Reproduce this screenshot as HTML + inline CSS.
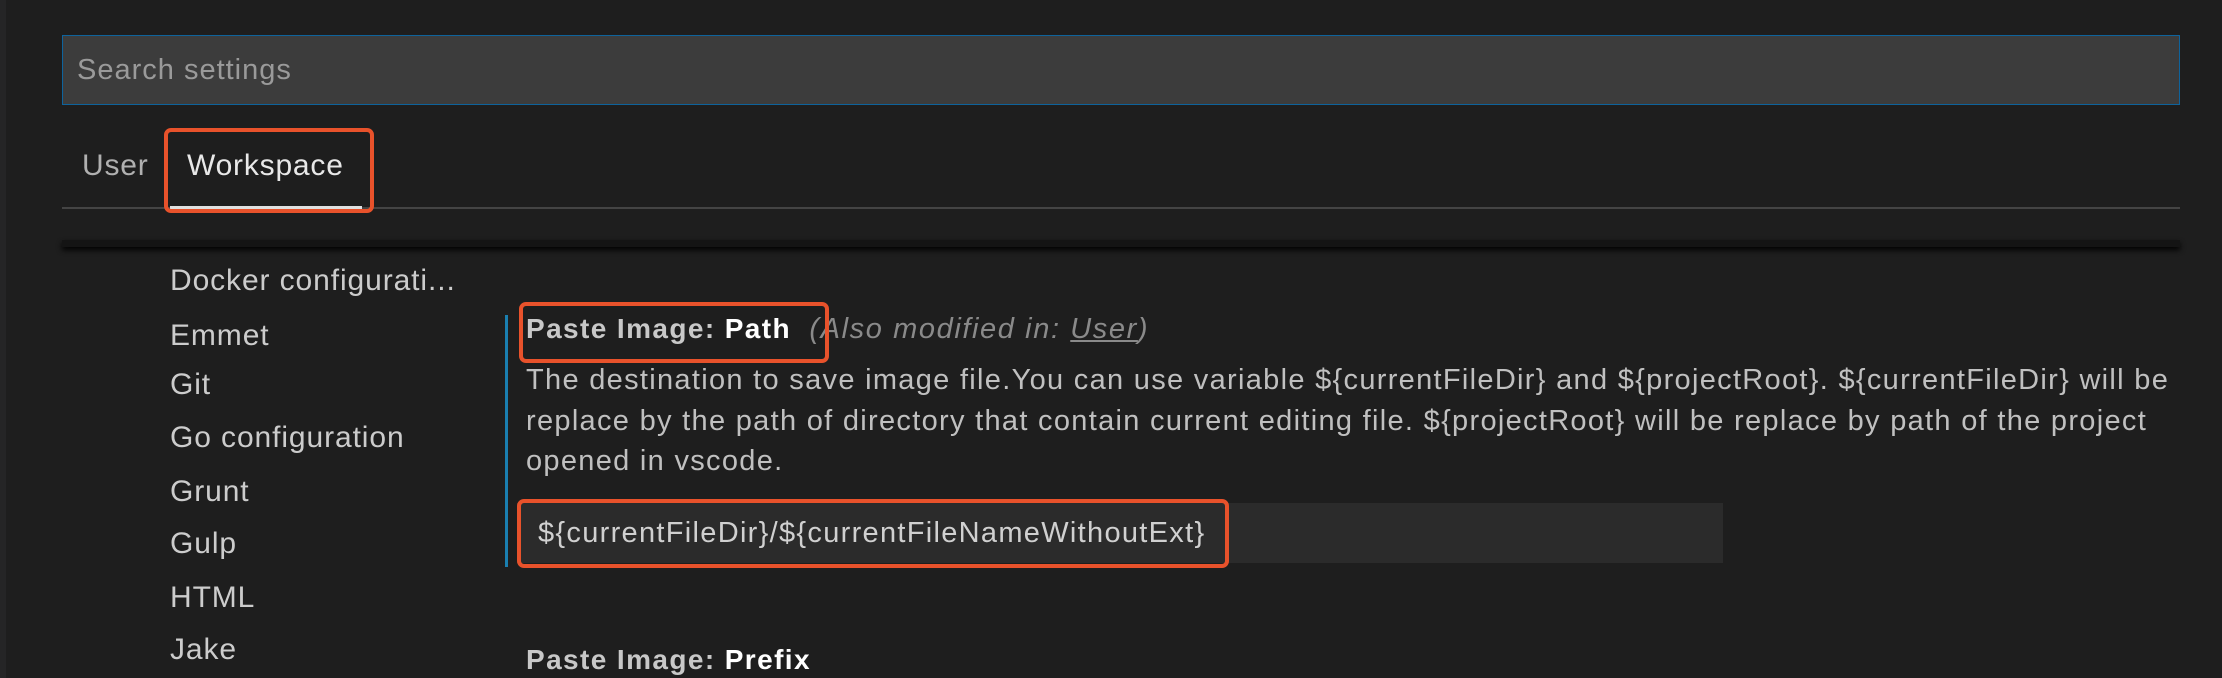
<!DOCTYPE html>
<html><head><meta charset="utf-8"><style>
*{margin:0;padding:0;box-sizing:border-box}
body{width:2222px;height:678px;background:#1e1e1e;font-family:"Liberation Sans",sans-serif;color:#cccccc;position:relative;overflow:hidden}
.abs{position:absolute}
.search{left:62px;top:35px;width:2118px;height:70px;background:#3c3c3c;border:1px solid #0e639c;color:#9a9a9a;font-size:29px;letter-spacing:1px;line-height:68px;padding-left:14px}
.tab{top:147px;font-size:30px;letter-spacing:0.8px;line-height:38px}
.ob{border:4px solid #e8522b;border-radius:7px}
.list div{position:absolute;left:170px;font-size:30px;letter-spacing:0.9px;color:#cccccc;line-height:36px}
.desc{left:526px;top:360px;width:1660px;font-size:29px;letter-spacing:1.3px;line-height:40.5px;color:#c0c0c0}
</style></head><body>
<div class="abs" style="left:0;top:0;width:6px;height:678px;background:#252526"></div>
<div class="abs search">Search settings</div>
<div class="abs tab" style="left:82px;color:#b0b0b0">User</div>
<div class="abs tab" style="left:187px;color:#e8e8e8">Workspace</div>
<div class="abs" style="left:62px;top:207px;width:2118px;height:2px;background:#444"></div>
<div class="abs" style="left:170px;top:206px;width:192px;height:3px;background:#e0e0e0"></div>
<div class="abs ob" style="left:164px;top:128px;width:210px;height:85px"></div>
<div class="abs" style="left:62px;top:240px;width:2118px;height:7px;background:#141414;box-shadow:0 3px 6px #000"></div>
<div class="list">
<div style="top:263px">Docker configurati...</div>
<div style="top:318px">Emmet</div>
<div style="top:367px">Git</div>
<div style="top:420px">Go configuration</div>
<div style="top:474px">Grunt</div>
<div style="top:526px">Gulp</div>
<div style="top:580px">HTML</div>
<div style="top:632px">Jake</div>
</div>
<div class="abs" style="left:505px;top:315px;width:3px;height:252px;background:#1a7fb0"></div>
<div class="abs" style="left:526px;top:311px;font-size:28px;letter-spacing:1.4px;line-height:36px;color:#d8d8d8;white-space:nowrap"><b style="font-weight:bold;color:#c8c8c8">Paste Image: </b><b style="color:#fff">Path</b>&nbsp;&nbsp;<i style="color:#8a8a8a;font-size:29px;letter-spacing:1.6px">(Also modified in: <u>User</u>)</i></div>
<div class="abs ob" style="left:519px;top:302px;width:310px;height:61px"></div>
<div class="abs desc">The destination to save image file.You can use variable ${currentFileDir} and ${projectRoot}. ${currentFileDir} will be replace by the path of directory that contain current editing file. ${projectRoot} will be replace by path of the project opened in vscode.</div>
<div class="abs" style="left:517px;top:503px;width:1206px;height:60px;background:#2b2b2b"></div>
<div class="abs" style="left:538px;top:515px;font-size:29px;letter-spacing:1.3px;line-height:36px;color:#d0d0d0">${currentFileDir}/${currentFileNameWithoutExt}</div>
<div class="abs ob" style="left:517px;top:499px;width:712px;height:69px"></div>
<div class="abs" style="left:526px;top:642px;font-size:28px;letter-spacing:1.4px;line-height:36px;color:#c8c8c8;font-weight:bold">Paste Image: <span style="color:#fff">Prefix</span></div>
</body></html>
